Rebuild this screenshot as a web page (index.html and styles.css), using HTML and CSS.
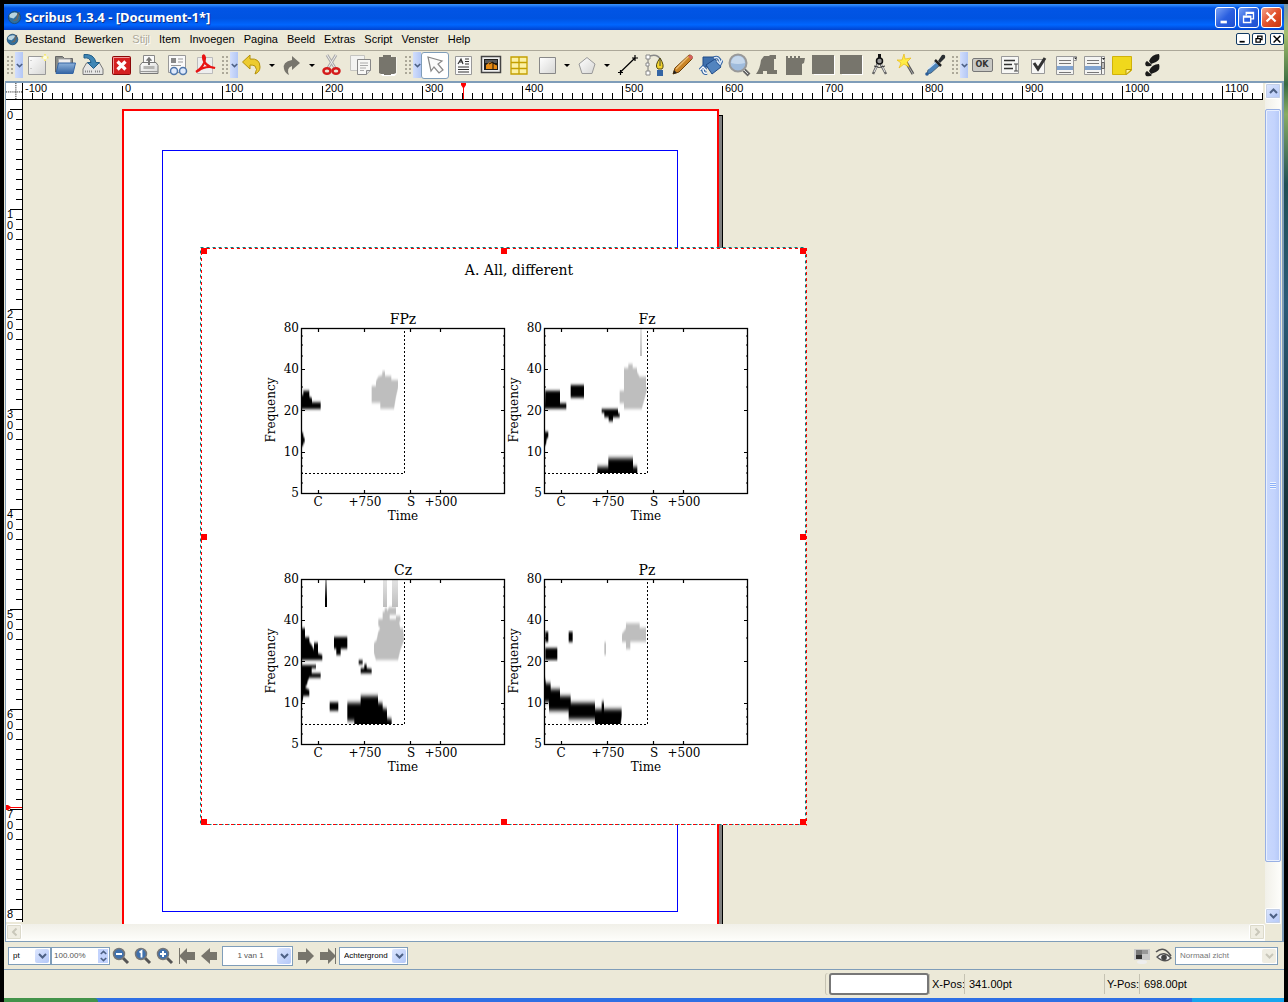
FILE: index.html
```html
<!DOCTYPE html>
<html lang="nl">
<head>
<meta charset="utf-8">
<title>Scribus 1.3.4 - [Document-1*]</title>
<link rel="stylesheet" href="styles.css">
</head>
<body>
<svg class="defs" aria-hidden="true">
  <defs>
    <linearGradient id="gold" x2="0" y2="1"><stop offset="0" stop-color="#fdf29a"/><stop offset="1" stop-color="#d9ad08"/></linearGradient>
    <linearGradient id="paper" x2="1" y2="1"><stop offset="0" stop-color="#fff"/><stop offset="1" stop-color="#d6d6d4"/></linearGradient>
    <linearGradient id="sky" x2="0" y2="1"><stop offset="0" stop-color="#8fb4dc"/><stop offset="1" stop-color="#3465a4"/></linearGradient>
    <linearGradient id="streak-gray" x2="0" y2="1"><stop offset="0" stop-color="#e2e2e2"/><stop offset="1" stop-color="#bebebe"/></linearGradient>
    <linearGradient id="streak-black" x2="0" y2="1"><stop offset="0" stop-color="#aaa"/><stop offset=".7" stop-color="#000"/></linearGradient>
    <filter id="soft" x="-5%" y="-5%" width="110%" height="110%"><feGaussianBlur stdDeviation="1 4"/></filter>
    <filter id="soft-low" x="-5%" y="-20%" width="110%" height="140%"><feGaussianBlur stdDeviation="1 7"/></filter>
    <clipPath id="upper-row"><path d="M302 329h101v144H302zM545 329h102v144H545z"/></clipPath>
    <clipPath id="lower-row"><path d="M302 580h102v144H302zM545 580h102v144H545z"/></clipPath>
    <pattern id="ticks-x" width="10" height="17" patternUnits="userSpaceOnUse" x="9"><path d="M.5 10v7" stroke="#000"/></pattern>
    <pattern id="ticks-y" width="17" height="10" patternUnits="userSpaceOnUse" y="9"><path d="M10 .5h7" stroke="#000"/></pattern>
    <symbol id="globe" viewBox="0 0 16 16"><circle cx="8" cy="8" r="6.500" fill="#2f6f9f"/><path d="M2 5Q8 1 12 4l-5 5-4-1z" fill="#b9d3df"/><path d="M6 12l4-3 1-6 3-1-3 9z" fill="#6d675f"/><circle cx="8" cy="8" r="6.500" fill="none" stroke="#1d4b73"/></symbol>
    <symbol id="chevron" viewBox="0 0 9 6"><path d="M1 1l3.500 3.500L8 1" fill="none" stroke="currentColor" stroke-width="2"/></symbol>
    <symbol id="axes" viewBox="0 0 260 210" overflow="visible">
      <path d="M0 145.500H103.500V0" fill="none" stroke="#000" stroke-dasharray="2 2"/>
      <rect x=".5" y=".5" width="203" height="165" fill="none" stroke="#000" stroke-width="1.300"/>
      <path d="M17.500 0v4M63.500 0v4M109.500 0v4M139.500 0v4M17.500 166v-4M63.500 166v-4M109.500 166v-4M139.500 166v-4M0 41.500h4M0 82.500h4M0 124.500h4M204 41.500h-4M204 82.500h-4M204 124.500h-4" stroke="#000" stroke-width="1.200"/>
      <path d="M0 8h2M0 17h2M0 28h2M0 59h2M0 130h2M0 138h2M0 145h2M0 155h2M204 8h-2M204 17h-2M204 28h-2M204 59h-2M204 130h-2M204 138h-2M204 145h-2M204 155h-2" stroke="#000"/>
      <g text-anchor="end"><text x="-2" y="4">80</text><text x="-2" y="45">40</text><text x="-2" y="87">20</text><text x="-2" y="128">10</text><text x="-2" y="169">5</text></g>
      <g text-anchor="middle"><text x="17" y="178">C</text><text x="64" y="178">+750</text><text x="110" y="178">S</text><text x="140" y="178">+500</text><text x="102" y="192">Time</text><text transform="translate(-26 82) rotate(-90)">Frequency</text></g>
    </symbol>
  </defs>
</svg>

<div class="desktop">
<div class="window">
  <header class="titlebar">
    <svg class="app-icon"><use href="#globe"/></svg>
    <h1>Scribus 1.3.4 - [Document-1*]</h1>
    <div class="window-buttons">
      <button aria-label="Minimaliseren"><svg viewBox="0 0 21 21"><path d="M5 14h7v3H5z" fill="#fff"/></svg></button>
      <button aria-label="Vorig formaat"><svg viewBox="0 0 21 21"><path d="M8 8V5h8v7h-3M8 6h8M5 9h8v7H5zM5 10h8" fill="none" stroke="#fff" stroke-width="1.500"/></svg></button>
      <button class="close" aria-label="Sluiten"><svg viewBox="0 0 21 21"><path d="M5 5l10 10M15 5L5 15" stroke="#fff" stroke-width="2.400"/></svg></button>
    </div>
  </header>

  <nav class="menubar">
    <svg class="doc-icon"><use href="#globe"/></svg>
    <button>Bestand</button><button>Bewerken</button><button disabled>Stijl</button><button>Item</button><button>Invoegen</button><button>Pagina</button><button>Beeld</button><button>Extras</button><button>Script</button><button>Venster</button><button>Help</button>
    <div class="doc-buttons">
      <button aria-label="Document minimaliseren"><svg viewBox="0 0 14 12"><path d="M3 9h6" stroke="#000" stroke-width="2"/></svg></button>
      <button aria-label="Document herstellen"><svg viewBox="0 0 14 12"><path d="M5.500 5V2.500h5v4H9M5 2.500h6M3.500 5.500h5v4h-5zM3 5.500h6" fill="none" stroke="#000" stroke-width="1.500"/></svg></button>
      <button class="last" aria-label="Document sluiten"><svg viewBox="0 0 14 12"><path d="M3 2l8 8M11 2l-8 8" stroke="#000" stroke-width="1.700"/></svg></button>
    </div>
  </nav>

  <div class="toolbar">
    <span class="grip"></span><button class="more" aria-label="Bestand"><svg><use href="#chevron"/></svg></button>
    <button aria-label="Nieuw"><svg viewBox="0 0 24 24"><path d="M3.500 3.500h17v18h-17z" fill="url(#paper)" stroke="#999"/><path d="M6 7v1M6 15v1" stroke="#aaa"/><path d="M20 1v7M16.500 4.500h7" stroke="#f5e97a" stroke-width="2"/><circle cx="20" cy="4.500" r="2" fill="#fffde0"/></svg></button>
    <button aria-label="Openen"><svg viewBox="0 0 24 24"><path d="M2.500 19V3.500h7l2 2h8V19z" fill="#8a8d88" stroke="#666"/><path d="M5.500 6h12v8h-12z" fill="#eee" stroke="#aaa"/><path d="M3 20.500L5.500 10h17l-2.500 10.500z" fill="url(#sky)" stroke="#3465a4"/></svg></button>
    <button aria-label="Opslaan"><svg viewBox="0 0 24 24"><path d="M5.500 10h13l3.500 6v5.500H2V16z" fill="#e6e6e4" stroke="#777"/><path d="M4 18.500h8M14 18.500h6" stroke="#888" stroke-dasharray="1 1" stroke-width="2"/><path d="M3 1.500q10-1 12 8h3.500l-6 6-6-6H10Q9 4 3 5z" fill="#3f86b5" stroke="#1f5d88"/></svg></button>
    <button aria-label="Sluiten"><svg viewBox="0 0 24 24"><rect x="3.500" y="3.500" width="18" height="18" rx="1" fill="#d42020" stroke="#8c0808"/><path d="M4.500 20.500v-16h16" stroke="#f19a9a" fill="none"/><path d="M8.500 8.500l8 8M16.500 8.500l-8 8" stroke="#fff" stroke-width="3.200"/></svg></button>
    <button aria-label="Afdrukken"><svg viewBox="0 0 24 24"><path d="M6.500 11V2.500h11V11" fill="#fafafa" stroke="#888"/><path d="M12 4l3 3.500h-2V12h-2V7.500H9z" fill="#777"/><path d="M3 12.500l2-3h14l2 3v8H3z" fill="url(#paper)" stroke="#777"/><path d="M6.500 13h11v3h-11z" fill="#b5b5b3"/><path d="M12 4l3 3.500h-2V12h-2V7.500H9z" fill="#777"/><path d="M3 18.500h18" stroke="#999"/></svg></button>
    <button aria-label="Controleren"><svg viewBox="0 0 24 24"><path d="M3.500 2.500h17v17h-17z" fill="#fafafa" stroke="#999"/><path d="M6 5h5v5H6z" fill="#888"/><path d="M13 6h5M13 9h5M6 12.500h10" stroke="#999"/><g fill="#dfeafc" stroke="#4f77ab" stroke-width="1.500"><circle cx="9" cy="18" r="3.500"/><circle cx="18" cy="18" r="3.500"/></g></svg></button>
    <button aria-label="PDF"><svg viewBox="0 0 24 24"><path d="M4.500 4.500h15v16h-15z" fill="#eee" stroke="#bbb"/><path d="M3 19q9-6 9-14-1-4-2-2 0 10 12 12-9-3-17 3" fill="none" stroke="#e81313" stroke-width="2.200"/></svg></button>

    <span class="grip"></span><button class="more" aria-label="Bewerken"><svg><use href="#chevron"/></svg></button>
    <button aria-label="Ongedaan maken"><svg viewBox="0 0 24 24"><path d="M10 2v4q10-1 10 8 0 5-5 7 3-5 0-8-2-1-5-1v4L2.500 9z" fill="#edcb30" stroke="#b3910b"/></svg></button>
    <button class="drop" aria-label="Meer"></button>
    <button aria-label="Opnieuw"><svg viewBox="0 0 24 24"><path d="M12 3v4Q2 9 4 16q1 4 5 6-3-7 3-9v4l8-7z" fill="#77756c"/></svg></button>
    <button class="drop" aria-label="Meer"></button>
    <button aria-label="Knippen"><svg viewBox="0 0 24 24"><path d="M7 2l8 13M16 2L8 15" stroke="#aaa" stroke-width="3"/><path d="M7 2l8 13M16 2L8 15" stroke="#eee"/><g fill="none" stroke="#d41c1c" stroke-width="2.500"><ellipse cx="7" cy="18" rx="3.500" ry="2.800"/><ellipse cx="16" cy="18" rx="3.500" ry="2.800"/></g></svg></button>
    <button aria-label="Kopiëren"><svg viewBox="0 0 24 24"><path d="M2.500 2.500h14v15h-14z" fill="#f3f3f1" stroke="#c4c4c0"/><path d="M9.500 6.500h13v11l-4 4h-9z" fill="#f7f7f5" stroke="#888"/><path d="M12 10h8M12 12.500h8M12 15h6M12 17.500h4" stroke="#aaa"/><path d="M18.500 21.500v-4h4" fill="#ddd" stroke="#888"/></svg></button>
    <button aria-label="Plakken"><svg viewBox="0 0 24 24"><path d="M4.500 4h4V2h7v2h5v17l-2 2h-12l-2-2z" fill="#fff"/><path d="M3 4h4V2h8v2h5v16l-2 1h-3v1H8v-1H5l-2-1z" fill="#77756c"/></svg></button>

    <span class="grip"></span><button class="more" aria-label="Gereedschap"><svg><use href="#chevron"/></svg></button>
    <button class="active" aria-label="Selecteren"><svg viewBox="0 0 24 24"><path d="M5 4l14 4-4 3 5 6-4 3-5-6-3 4z" fill="#fafafa" stroke="#888" stroke-width="1.200"/></svg></button>
    <button aria-label="Tekstkader"><svg viewBox="0 0 24 24"><path d="M4.500 3.500h16v18h-16z" fill="#fafafa" stroke="#999"/><path d="M7 11l3-5 2 5M8 9h4M14 6h4M14 8.500h4M14 11h4M7 14h11M7 16.500h11M7 19h11" fill="none" stroke="#333" stroke-width="1.200"/></svg></button>
    <button aria-label="Afbeelding"><svg viewBox="0 0 24 24"><path d="M2.500 3.500h19v16h-19z" fill="#eee" stroke="#444" stroke-width="1.500"/><path d="M5 6h14v11H5z" fill="#1d1d1b"/><path d="M6 7h12v3H6z" fill="#58595a"/><path d="M7 16v-4l4-3 7 3v4z" fill="#e68a13"/><path d="M14 16V9l-4 2M14 10l4 2" stroke="#1a1208" fill="none"/></svg></button>
    <button aria-label="Tabel"><svg viewBox="0 0 24 24"><path d="M4 4h16v17H4zM12 4v17M4 9.500h16M4 15.500h16" fill="#fcf1a4" stroke="#c4a000" stroke-width="1.300"/></svg></button>
    <button aria-label="Vorm"><svg viewBox="0 0 24 24"><path d="M4.500 4.500h16v16h-16z" fill="url(#paper)" stroke="#888"/></svg></button>
    <button class="drop" aria-label="Meer"></button>
    <button aria-label="Veelhoek"><svg viewBox="0 0 24 24"><path d="M12 4.500l8 6.500-3 9.500H7L4 11z" fill="url(#paper)" stroke="#999"/></svg></button>
    <button class="drop" aria-label="Meer"></button>
    <button aria-label="Lijn"><svg viewBox="0 0 24 24"><path d="M5 19.500L20 5M3 19.500h5M5.500 17v5M17 5h6M20 2v6" stroke="#000" stroke-width="1.200"/></svg></button>
    <button aria-label="Bezier"><svg viewBox="0 0 24 24"><path d="M4 4Q15-1 18 8" fill="none" stroke="#888" stroke-width="1.500"/><path d="M5 4v17" stroke="#777"/><path d="M3 2h4v4H3zM3 18h4v4H3zM3 10h3v3H3z" fill="#fff" stroke="#888"/><path d="M17 5q5 8 2 11h-4q-4-3 2-11z" fill="#f3d42c" stroke="#4e460e"/><path d="M17 6v7" stroke="#444"/><path d="M14 17h6v6h-6z" fill="#3465a4"/></svg></button>
    <button aria-label="Potlood"><svg viewBox="0 0 24 24"><path d="M2 21l2-6L18 2q4 0 3 4L8 19z" fill="#c98426" stroke="#704005"/><path d="M5 16L18 3" stroke="#eebb70" stroke-width="1.500"/><path d="M17 3l3 4 2-3-2-2z" fill="#d66060"/><path d="M2 21l1-4 3 3z" fill="#222"/></svg></button>
    <button aria-label="Draaien"><svg viewBox="0 0 24 24"><path d="M4 4h12v10H4z" fill="#3f70ad" stroke="#204a87"/><path d="M7 12l9-6 6 8-9 7z" fill="#5284bf" stroke="#204a87"/><path d="M15 5q5-2 6 4M18 8l3 3 2-4" fill="none" stroke="#3465a4" stroke-width="3.500"/><path d="M15 5q5-2 6 4M18 8l3 3 2-4" fill="none" stroke="#dfeaf7" stroke-width="1.500"/><path d="M8 20q-4 1-4-4M1 17l3-3 3 3" fill="none" stroke="#3465a4" stroke-width="3.500"/><path d="M8 20q-4 1-4-4M1 17l3-3 3 3" fill="none" stroke="#fff" stroke-width="1.500"/></svg></button>
    <button aria-label="Zoom"><svg viewBox="0 0 24 24"><path d="M17 17l5 5" stroke="#666" stroke-width="4"/><path d="M17 17l4 4" stroke="#ddd"/><circle cx="11" cy="10" r="8.500" fill="#9fbbdc" stroke="#999" stroke-width="2"/><path d="M4 10q7 2 14 0-1-7-7-7t-7 7" fill="#c6d8ec"/></svg></button>
    <button aria-label="Inhoud bewerken"><svg viewBox="0 0 24 24"><path d="M9 3h5l1-1h6v4h-2v11h3v4H12v-3H8v3H1q4-5 5-14z" fill="#77756c"/></svg></button>
    <button aria-label="Tekst bewerken"><svg viewBox="0 0 24 24"><path d="M3 3h2v2h2V3h2v2h2V3h2v2h2V3h2v2h5l-1 5-2 1v11H3z" fill="#77756c"/></svg></button>
    <button aria-label="Koppelen"><svg viewBox="0 0 24 24"><path d="M3 3h21v19H3z" fill="#fff"/><path d="M1 2h22v19H1z" fill="#77756c"/></svg></button>
    <button aria-label="Ontkoppelen"><svg viewBox="0 0 24 24"><path d="M3 3h21v19H3z" fill="#fff"/><path d="M1 2h22v19H1z" fill="#77756c"/></svg></button>
    <button aria-label="Meten"><svg viewBox="0 0 24 24"><path d="M12 8L6 21M12 8l7 13" stroke="#666" stroke-width="2.500"/><path d="M12 9L7 19M13 9l5 10" stroke="#eee"/><path d="M7 13q5 3 11 0" fill="none" stroke="#333"/><path d="M11 1h3v4h-3z" fill="#111"/><circle cx="12.500" cy="8" r="3" fill="#999" stroke="#111" stroke-width="1.500"/></svg></button>
    <button aria-label="Eigenschappen kopiëren"><svg viewBox="0 0 24 24"><path d="M11 9l7 12" stroke="#555" stroke-width="3"/><path d="M12 11l6 10" stroke="#aaa"/><path d="M9 1l1 5 6-1-4 4 2 5-5-3-5 4 2-5-4-3h5z" fill="#ffec45" stroke="#e9b913" stroke-width=".7"/></svg></button>
    <button aria-label="Pipet"><svg viewBox="0 0 24 24"><path d="M13 8l4 4-9 8-4 1 1-4z" fill="#4a83bb" stroke="#49657f"/><path d="M5 16l8-7 2 2" fill="none" stroke="#d9e9f8" stroke-width="1.500"/><path d="M12 7l6 6" stroke="#222" stroke-width="2.500"/><path d="M15 8l4-6q4-1 3 3l-5 5z" fill="#2c3034"/><circle cx="4" cy="21" r="1.800" fill="#2a5d98"/></svg></button>

    <span class="grip"></span><button class="more" aria-label="PDF-gereedschap"><svg><use href="#chevron"/></svg></button>
    <button class="ok-tool"><span>OK</span></button>
    <button aria-label="Tekstveld"><svg viewBox="0 0 24 24"><path d="M3.500 3.500h17v17h-17z" fill="#f7f7f5" stroke="#999"/><path d="M6 7.500h11M6 11.500h8M6 15.500h9" stroke="#333" stroke-width="1.300"/><path d="M16 11h4M18 11v7M16 18h4" stroke="#444"/></svg></button>
    <button aria-label="Selectievakje"><svg viewBox="0 0 24 24"><path d="M5.500 6.500h13v14h-13z" fill="#f7f7f5" stroke="#999"/><path d="M8 10l4 6 7-11" fill="none" stroke="#333" stroke-width="3"/></svg></button>
    <button aria-label="Keuzelijst"><svg viewBox="0 0 24 24"><path d="M2.500 3.500h17v18h-17zM19.500 3.500h3v4h-3" fill="#f4f4f2" stroke="#999"/><path d="M3 13h16v4H3z" fill="#80a3cf"/><path d="M5 7.500h12M5 10.500h12M5 19.500h12" stroke="#777"/><path d="M20 4.500h3l-1.500 2z" fill="#222"/></svg></button>
    <button aria-label="Lijst"><svg viewBox="0 0 24 24"><path d="M2.500 3.500h20v18h-20z" fill="#f4f4f2" stroke="#999"/><path d="M3 13h16v4H3z" fill="#80a3cf"/><path d="M5 7.500h12M5 10.500h12M5 19.500h12M19.500 4v17" stroke="#777"/><path d="M19.500 9.500h3v6h-3z" fill="#bbb" stroke="#666"/><path d="M20 5h3l-1.500 2z" fill="#222"/></svg></button>
    <button aria-label="Notitie"><svg viewBox="0 0 24 24"><path d="M2.500 3.500h19v14l-5 4h-14z" fill="#f0d81c" stroke="#d0b20a"/><path d="M16 21.500v-5h5.500z" fill="#fff4a2" stroke="#b99a05"/></svg></button>
    <button aria-label="Koppeling"><svg viewBox="0 0 24 24"><g fill="#1b1b1a"><path d="M11 8q3-7 10-7 2 5-3 8l-5 2zM9 8l5 4q-2 2-6 1-2-3 1-5z"/><path d="M11 18q3-7 10-7 2 5-3 8l-5 2zM9 18l5 4q-2 2-6 1-2-3 1-5z"/></g></svg></button>
  </div>

  <main class="workspace">
    <svg class="corner" viewBox="0 0 17 17"><path d="M0 9.500h17M10.500 0v17" stroke="#000" stroke-dasharray="1 1"/></svg>
    <svg class="ruler-x">
      <rect width="1240" height="17" fill="url(#ticks-x)"/>
      <path d="M99.500 3v14M199.500 3v14M299.500 3v14M399.500 3v14M499.500 3v14M599.500 3v14M699.500 3v14M799.500 3v14M899.500 3v14M999.500 3v14M1099.500 3v14M1199.500 3v14" stroke="#000"/>
      <text x="2" y="9">-100</text><text x="102" y="9">0</text><text x="202" y="9">100</text><text x="302" y="9">200</text><text x="402" y="9">300</text><text x="502" y="9">400</text><text x="602" y="9">500</text><text x="702" y="9">600</text><text x="802" y="9">700</text><text x="902" y="9">800</text><text x="1002" y="9">900</text><text x="1102" y="9">1000</text><text x="1202" y="9">1100</text>
      <path d="M438 0h5v2l-2 3v12h-1V5l-2-3z" fill="red"/>
      <rect y="16" width="1240" height="1"/>
    </svg>
    <div class="scroll-v">
      <button aria-label="Omhoog"><svg class="up"><use href="#chevron"/></svg></button>
      <div class="thumb"><i></i></div>
      <button aria-label="Omlaag"><svg><use href="#chevron"/></svg></button>
    </div>
    <svg class="ruler-y">
      <rect width="17" height="821" fill="url(#ticks-y)"/>
      <path d="M4 9.500h13M4 109.500h13M4 209.500h13M4 309.500h13M4 409.500h13M4 509.500h13M4 609.500h13M4 709.500h13M4 809.500h13" stroke="#000"/>
      <g>
        <text x="1" y="19">0</text>
        <text y="118"><tspan x="1">1</tspan><tspan x="1" dy="11">0</tspan><tspan x="1" dy="11">0</tspan></text>
        <text y="218"><tspan x="1">2</tspan><tspan x="1" dy="11">0</tspan><tspan x="1" dy="11">0</tspan></text>
        <text y="318"><tspan x="1">3</tspan><tspan x="1" dy="11">0</tspan><tspan x="1" dy="11">0</tspan></text>
        <text y="418"><tspan x="1">4</tspan><tspan x="1" dy="11">0</tspan><tspan x="1" dy="11">0</tspan></text>
        <text y="518"><tspan x="1">5</tspan><tspan x="1" dy="11">0</tspan><tspan x="1" dy="11">0</tspan></text>
        <text y="618"><tspan x="1">6</tspan><tspan x="1" dy="11">0</tspan><tspan x="1" dy="11">0</tspan></text>
        <text y="718"><tspan x="1">7</tspan><tspan x="1" dy="11">0</tspan><tspan x="1" dy="11">0</tspan></text>
        <text x="1" y="818">8</text>
      </g>
      <path d="M0 705h2l3 2h12v1H5l-3 2H0z" fill="red"/>
    </svg>
    <svg class="canvas" role="img" aria-label="Document-1">
      <!-- everything below is in window coordinates -->
      <g transform="translate(-23 -100)">
        <path d="M600 115h123v900H600z"/><path d="M600 116h122v900H600z" fill="#808080"/>
        <rect x="123" y="110" width="595" height="842" fill="#fff" stroke="red" stroke-width="2"/>
        <rect x="162.500" y="150.500" width="515" height="761" fill="none" stroke="#00f"/>
        <rect x="201" y="248" width="605" height="577" fill="#fff"/>
        <rect x="200.500" y="247.500" width="605" height="577" fill="none" stroke="teal" stroke-dasharray="3 3"/>
        <path d="M201.500 825V248.500H806" fill="none" stroke="red" stroke-dasharray="3 3"/>
        <path d="M806.500 248V825.500M201 824.500H806" fill="none" stroke="red" stroke-dasharray="3 3"/>

        <g class="plots">
          <g clip-path="url(#upper-row)">
            <g fill="#bebebe" transform="translate(250 300) scale(.3333)" filter="url(#soft)"><path d="M397 214h8v14h19v12h20v24l-6 26-6 36h-41v-18h-26v-50h13v-14l7-14 12-5z"/></g>
            <g transform="translate(250 300) scale(.3333)" filter="url(#soft)"><path d="M155 285h5v-13h18v18l8 5v12h26v20h-57zM155 398h5v12l4 4v14h-4v10h-5z"/></g>
            <g fill="#bebebe" transform="translate(500 300) scale(.3333)" filter="url(#soft)"><path d="M372 204h13v-12h13v12h13v11l8 15h19v35h4l-10 37-7 25h-53v-17h-13v-38h13z"/></g>
            <path d="M640 329h2v27h-2z" fill="url(#streak-gray)"/>
            <g transform="translate(500 300) scale(.3333)" filter="url(#soft)"><path d="M136 272h44v38h19v16h-64zM212 255h40v38h-40zM305 327h49v13h5v12h-20v12h-13v-12h-13v-14h-8zM135 395h10v17l-5 5-2 18h-3z"/></g>
            <g transform="translate(500 300) scale(.3333)" filter="url(#soft-low)"><path d="M292 539v-39h33v-25h74v25h13v39z"/></g>
          </g>
          <g clip-path="url(#lower-row)">
            <g fill="#bebebe" transform="translate(250 550) scale(.3333)" filter="url(#soft)"><path d="M398 185h6v-10h7v8l7-11h20v23h-19v12h19v-10h13v18h-4l4 20h8l3 35-11 30-7 30h-66l-6-20v-30l8-10 5-25 6-10-6-7v-21h13z"/></g>
            <path d="M383 580h4v27h-4zM392 580h6v27h-6z" fill="url(#streak-gray)"/>
            <path d="M325 580h2v27h-2z" fill="url(#streak-black)"/>
            <g transform="translate(250 550) scale(.3333)" filter="url(#soft)"><path d="M155 235h10v27h13v13l7 10 7 15v-22h12v32l13 5v15h-62zM155 345h43v10h-13v15h27v13h-34l-6 12v7l-7 10 13 8v18h-18l-2 17h-3zM252 261h40v35h-20v19h-13v-19h-7zM326 331h12v12h-12zM332 370v-15h11v-12h7v12l15 2v13zM239 457h26v25h-26z"/></g>
            <g transform="translate(250 550) scale(.3333)" filter="url(#soft-low)"><path d="M292 512v-54h40v-20h52v20l14 2v15l13 2v28l14 2v36H313v-31z"/></g>
            <g fill="#bebebe" transform="translate(500 550) scale(.3333)" filter="url(#soft)"><path d="M378 220h41v13h19v42h-47v22h-13v-21h-12v-24l12-17zM313 277h5v38h-5z"/></g>
            <g transform="translate(500 550) scale(.3333)" filter="url(#soft)"><path d="M136 245h9v31h-9zM206 245h12v31h-12zM136 294h36v36h-36z"/></g>
            <g transform="translate(500 550) scale(.3333)" filter="url(#soft-low)"><path d="M135 385l3 15h14v18h28v20h32v20h73v20h20v-22h7v22h53v22l-6 43h-74v-36h-79v-25h-59v-25h-12z"/></g>
          </g>

          <use href="#axes" x="301" y="328" width="260" height="210"/>
          <use href="#axes" x="544" y="328" width="260" height="210"/>
          <use href="#axes" x="301" y="579" width="260" height="210"/>
          <use href="#axes" x="544" y="579" width="260" height="210"/>
          <g class="plot-title" text-anchor="middle"><text x="519" y="275">A. All, different</text><text x="403" y="324">FPz</text><text x="647" y="324">Fz</text><text x="403" y="575">Cz</text><text x="647" y="575">Pz</text></g>
        </g>

        <path fill="red" d="M201 248h6v6h-6zM501 248h6v6h-6zM800 248h6v6h-6zM201 534h6v6h-6zM800 534h6v6h-6zM201 819h6v6h-6zM501 819h6v6h-6zM800 819h6v6h-6z"/>
      </g>
    </svg>
    <div class="scroll-h">
      <button disabled aria-label="Links"><svg class="left"><use href="#chevron"/></svg></button>
      <button disabled aria-label="Rechts"><svg class="right"><use href="#chevron"/></svg></button>
    </div>
  </main>

  <div class="viewbar">
    <span class="combo unit"><select aria-label="Eenheid"><option>pt</option></select><i><svg><use href="#chevron"/></svg></i></span>
    <span class="combo percent"><input type="text" value="100.00%" aria-label="Zoomniveau"><span class="spin"><button aria-label="Hoger"><svg class="up"><use href="#chevron"/></svg></button><button aria-label="Lager"><svg><use href="#chevron"/></svg></button></span></span>
    <button class="view-tool" aria-label="Uitzoomen"><svg viewBox="0 0 18 18"><path d="M11 11l5 5" stroke="#555" stroke-width="3"/><circle cx="7" cy="7" r="5.500" fill="#3f70ad" stroke="#777" stroke-width="1.500"/><path d="M4 7h6" stroke="#fff" stroke-width="2"/></svg></button>
    <button class="view-tool" aria-label="Zoom 100%"><svg viewBox="0 0 18 18"><path d="M11 11l5 5" stroke="#555" stroke-width="3"/><circle cx="7" cy="7" r="5.500" fill="#3f70ad" stroke="#777" stroke-width="1.500"/><path d="M5.500 5.500L7.500 4v6.500" fill="none" stroke="#fff" stroke-width="1.800"/></svg></button>
    <button class="view-tool" aria-label="Inzoomen"><svg viewBox="0 0 18 18"><path d="M11 11l5 5" stroke="#555" stroke-width="3"/><circle cx="7" cy="7" r="5.500" fill="#3f70ad" stroke="#777" stroke-width="1.500"/><path d="M4 7h6M7 4v6" stroke="#fff" stroke-width="2"/></svg></button>
    <button class="view-tool" aria-label="Eerste pagina"><svg viewBox="0 0 18 18"><path d="M1 1h1v7l7-7v4h8v8H9v4L2 10v7H1z" fill="#77756c"/></svg></button>
    <button class="view-tool" aria-label="Vorige pagina"><svg viewBox="0 0 18 18"><path d="M1 9l9-8v4h7v8h-7v4z" fill="#77756c"/></svg></button>
    <span class="combo pages"><select aria-label="Pagina"><option>1 van 1</option></select><i><svg><use href="#chevron"/></svg></i></span>
    <button class="view-tool" aria-label="Volgende pagina"><svg viewBox="0 0 18 18"><path d="M17 9L9 1v4H1v8h8v4z" fill="#77756c"/></svg></button>
    <button class="view-tool" aria-label="Laatste pagina"><svg viewBox="0 0 18 18"><path d="M17 1h-1v7L9 1v4H1v8h8v4l7-7v7h1z" fill="#77756c"/></svg></button>
    <span class="combo layer"><select aria-label="Laag"><option>Achtergrond</option></select><i><svg><use href="#chevron"/></svg></i></span>
    <span class="spacer"></span>
    <button class="view-tool" aria-label="Kleurbeheer"><svg viewBox="0 0 18 18"><path d="M1 2h16v11H1z" fill="#c9c9c9"/><path d="M3 3h6v5H3z" fill="#777"/><path d="M3 8h6v4H3z" fill="#333"/><path d="M9 3h6v4H9z" fill="#999"/><ellipse cx="9" cy="15" rx="5" ry="2" fill="#eee"/></svg></button>
    <button class="view-tool" aria-label="Voorbeeld"><svg viewBox="0 0 18 18"><path d="M1 5q8-7 15 4" fill="none" stroke="#555" stroke-width="1.600"/><path d="M2 10q7-7 14 1-6 6-14-1z" fill="#f4f4f4" stroke="#555" stroke-width="1.300"/><circle cx="9" cy="10.500" r="2.800" fill="#444"/></svg></button>
    <span class="combo vision"><select disabled aria-label="Zicht"><option>Normaal zicht</option></select><i><svg><use href="#chevron"/></svg></i></span>
  </div>

  <footer class="status">
    <span class="progress"></span>
    <span class="label">X-Pos:</span><output class="value">341.00pt</output>
    <span class="label">Y-Pos:</span><output class="value">698.00pt</output>
  </footer>
</div>
<div class="taskbar"><span class="start"></span><span class="tray"></span></div>
</div>
</body>
</html>
```
FILE: styles.css
```css
* { box-sizing: border-box; }

body {
  margin: 0;
  background: #000;
  font: 11px "Liberation Sans", Arial, sans-serif;
  color: #000;
}

button {
  margin: 0;
  padding: 0;
  border: 0;
  background: none;
  font: inherit;
  color: inherit;
}

svg { display: block; }

.defs { position: absolute; width: 0; height: 0; }

.desktop {
  display: flex;
  flex-direction: column;
  height: 100vh;
  padding: 4px 4px 0;
  background:
    linear-gradient(#7394ab, #a5bf6d 3%, #386b42 8%, #88ad63 11%, #204f55 18%, #2b5b78 30%, #173238 50%, #14241a 75%, #000 86%) right 4px / 4px 100% no-repeat,
    #000;
}

.window {
  flex: 1;
  min-height: 0;
  display: flex;
  flex-direction: column;
  background: #ece9d8;
}

.titlebar {
  display: flex;
  align-items: center;
  height: 26px;
  padding: 0 2px 0 3px;
  background: linear-gradient(#3c96ff, #0255e5 15%, #0053e1 55%, #0066ff 80%, #0143cf);
}

.app-icon { width: 15px; height: 15px; margin-right: 3px; }

.titlebar h1 {
  flex: 1;
  margin: 0;
  font: bold 13px "Noto Sans", sans-serif;
  color: #fff;
  text-shadow: 1px 1px #0b2f8a;
}

.window-buttons { display: flex; gap: 2px; }

.window-buttons button {
  width: 21px;
  height: 21px;
  border: 1px solid #fff;
  border-radius: 3px;
  background: linear-gradient(135deg, #7ba2f5, #2a5fe0 50%, #1c4fd0);
}

.window-buttons .close { background: linear-gradient(135deg, #f2a28c, #e2512c 50%, #c8350c); }

.menubar {
  display: flex;
  align-items: center;
  gap: 9px;
  height: 21px;
  padding: 0 0 2px 2px;
  border-bottom: 1px solid #aca899;
}

.menubar :disabled { color: #aca899; text-shadow: 1px 1px #fff; }

.doc-icon { width: 13px; height: 13px; margin-right: -3px; }

.doc-buttons { display: flex; gap: 2px; margin-left: auto; }

.doc-buttons button {
  width: 14px;
  height: 12px;
  border: 1px solid #123a63;
  border-radius: 2px;
  background: #fff;
}

.doc-buttons .last { margin-left: 2px; }

.toolbar {
  display: flex;
  align-items: center;
  height: 29px;
  padding-bottom: 1px;
  overflow: hidden;
}

.toolbar button {
  display: grid;
  place-items: center;
  flex: none;
  width: 28px;
  height: 28px;
}

.toolbar button > svg { width: 24px; height: 24px; }

.toolbar .grip {
  flex: none;
  width: 11px;
  height: 20px;
  background: radial-gradient(#aca899 1px, transparent 1px) 3px 0 / 4px 4px content-box repeat;
  padding: 0 1px 0 3px;
}

.toolbar .more {
  width: 8px;
  height: 26px;
  background: linear-gradient(90deg, #d2defc, #b3c7f5);
  color: #4d6185;
}

.toolbar .more > svg { width: 7px; height: 5px; }

.toolbar .drop { width: 12px; }

.toolbar .drop::before {
  content: "";
  border: 3px solid transparent;
  border-top-color: #000;
  border-bottom: 0;
}

.toolbar .active {
  height: 27px;
  border: 1px solid #7f9db9;
  border-radius: 3px;
  background: #fff;
}

.ok-tool span {
  padding: 0 3px;
  border: 1px solid #777;
  border-radius: 2px;
  background: #c9c9c5;
  font: bold 8px/12px "DejaVu Sans", sans-serif;
  color: #333;
}

.workspace {
  flex: 1;
  min-height: 0;
  display: grid;
  grid-template: 17px 1fr 17px / 17px 1fr 17px;
  margin: 1px 0 0 1px;
  border: solid #7f9db9;
  border-width: 2px 2px 1px 1px;
}

.corner,
.ruler-y { width: 17px; background: #fff; border-right: 1px solid #000; }

.corner { height: 17px; border-bottom: 1px solid #000; }

.ruler-x { width: calc(100% - 2px); height: 17px; background: #fff; }

.ruler-y { height: calc(100% - 2px); }

.scroll-v {
  grid-row: 1 / 3;
  grid-column: 3;
  display: flex;
  flex-direction: column;
  background: linear-gradient(90deg, #f1f0e9, #fefefb);
  margin-right: 1px;
}

.scroll-v button,
.scroll-h button {
  display: grid;
  place-items: center;
  width: 16px;
  height: 16px;
  border: 1px solid #fff;
  border-radius: 2px;
  outline: 1px solid #c3cfe6;
  outline-offset: -2px;
  background: linear-gradient(135deg, #dce6fe, #b4c8f8);
  color: #4d6185;
}

.scroll-v svg,
.scroll-h svg { width: 9px; height: 6px; }

.up { transform: rotate(180deg); }
.left { transform: rotate(90deg); }
.right { transform: rotate(-90deg); }

.thumb {
  flex: 1;
  display: grid;
  place-items: center;
  margin: 10px 0 46px;
  border: 1px solid #98b0e4;
  border-radius: 2px;
  background: linear-gradient(90deg, #c9d8fc, #c3d3fd 60%, #b4c8f6);
  box-shadow: inset 0 0 0 1px #e8effe;
}

.thumb i {
  width: 6px;
  height: 7px;
  background: repeating-linear-gradient(#eef4fe 0 1px, #8cb0f8 1px 2px);
}

.canvas { width: 100%; height: 100%; overflow: hidden; }

.plots { font: 12px "DejaVu Serif", serif; }

.plots .plot-title { font-size: 14px; }

.scroll-h {
  grid-column: 1 / 3;
  display: flex;
  justify-content: space-between;
  background: linear-gradient(#f1f0e9, #fefefb);
}

.scroll-h button {
  outline-color: #dcdacb;
  background: #efede2;
  color: #c9c7ba;
}

.viewbar {
  display: flex;
  align-items: center;
  height: 28px;
  padding: 0 6px 0 4px;
  border-bottom: 1px solid #7f9db9;
}

.combo {
  display: flex;
  height: 18px;
  border: 1px solid #7f9db9;
  background: #fff;
  padding: 1px;
}

.combo select,
.combo input {
  appearance: none;
  flex: 1;
  min-width: 0;
  width: 0;
  margin: 0;
  padding: 0 3px;
  border: 0;
  background: none;
  font: 8px "Liberation Sans", Arial, sans-serif;
  color: #000;
  opacity: 1;
}

.combo input { padding: 0 1px; color: #555; }

.combo i {
  display: grid;
  place-items: center;
  width: 14px;
  border-radius: 2px;
  background: linear-gradient(135deg, #dce6fe, #b4c8f8);
  color: #4d6185;
}

.combo i svg { width: 9px; height: 6px; }

.spin {
  display: flex;
  flex-direction: column;
  width: 10px;
  background: #c3d3fd;
  color: #4d6185;
}

.spin button { flex: 1; display: grid; place-items: center; }
.spin svg { width: 7px; height: 5px; }

.unit { width: 43px; }
.percent { width: 59px; }
.pages { width: 71px; height: 20px; margin: 0 2px; }
.pages select { text-align: center; color: #555; }
.layer { width: 69px; }
.vision { width: 103px; }
.combo.vision select { color: #777; }
.vision i { background: #efede2; color: #c9c7ba; }

.view-tool { display: grid; place-items: center; width: 22px; height: 22px; }
.view-tool svg { width: 18px; height: 18px; }

.spacer { flex: 1; }

.status {
  display: flex;
  align-items: center;
  justify-content: flex-end;
  height: 28px;
  padding-right: 5px;
}

.progress {
  width: 100px;
  height: 22px;
  border: 2px solid #777;
  border-radius: 3px;
  background: #fff;
  box-shadow: -3px 0 #ece9d8, -4px 0 #c5c2b2;
}

.label,
.value {
  flex: none;
  border-left: 1px solid #c5c2b2;
  line-height: 20px;
  white-space: nowrap;
}

.label { width: 35px; padding-left: 2px; }

.value { width: 140px; padding-left: 4px; }

.taskbar {
  display: flex;
  justify-content: space-between;
  height: 4px;
  background: #2f6fe4;
}

.start { width: 94px; background: #43934a; border-radius: 0 4px 0 0; }
.tray { width: 92px; background: #18a5ee; }
```
